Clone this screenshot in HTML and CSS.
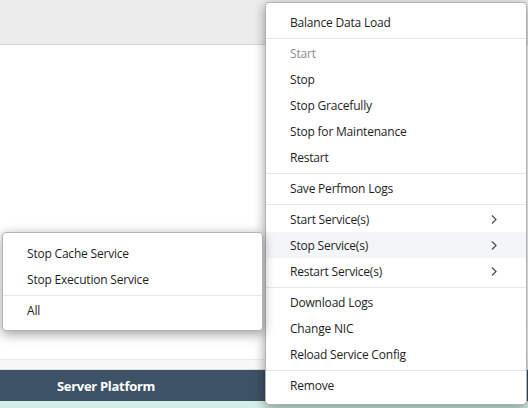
FILE: index.html
```html
<!DOCTYPE html>
<html lang="en">
<head>
    <meta charset="UTF-8">
    <meta name="viewport" content="width=device-width, initial-scale=1.0">
    <title>Server actions</title>
    <link rel="stylesheet" href="styles.css">
</head>
<body>
    <div class="page">
        <!-- Верхняя панель -->
        <div class="toolbar"></div>

        <div class="content">
            <div class="table">
                <div class="row"></div>
                <div class="row"></div>
                <div class="row row-last"></div>
                <div class="table-head">
                    <div class="head-cell">Server Platform</div>
                </div>
                <div class="table-row-selected"></div>
            </div>
        </div>

        <!-- Основное контекстное меню -->
        <div class="menu main-menu">
            <div class="menu-item">Balance Data Load</div>
            <div class="menu-sep"></div>
            <div class="menu-item disabled">Start</div>
            <div class="menu-item">Stop</div>
            <div class="menu-item">Stop Gracefully</div>
            <div class="menu-item">Stop for Maintenance</div>
            <div class="menu-item">Restart</div>
            <div class="menu-sep"></div>
            <div class="menu-item">Save Perfmon Logs</div>
            <div class="menu-sep"></div>
            <div class="menu-item has-sub">
                <span>Start Service(s)</span>
                <svg class="chevron" viewBox="0 0 6 10"><path d="M1 1 L5 5 L1 9"/></svg>
            </div>
            <div class="menu-item has-sub active">
                <span>Stop Service(s)</span>
                <svg class="chevron" viewBox="0 0 6 10"><path d="M1 1 L5 5 L1 9"/></svg>
            </div>
            <div class="menu-item has-sub">
                <span>Restart Service(s)</span>
                <svg class="chevron" viewBox="0 0 6 10"><path d="M1 1 L5 5 L1 9"/></svg>
            </div>
            <div class="menu-sep"></div>
            <div class="menu-item">Download Logs</div>
            <div class="menu-item">Change NIC</div>
            <div class="menu-item">Reload Service Config</div>
            <div class="menu-sep"></div>
            <div class="menu-item">Remove</div>
        </div>

        <!-- Подменю "Stop Service(s)" -->
        <div class="menu sub-menu">
            <div class="menu-item">Stop Cache Service</div>
            <div class="menu-item">Stop Execution Service</div>
            <div class="menu-sep"></div>
            <div class="menu-item">All</div>
        </div>
    </div>
</body>
</html>
```

FILE: styles.css
```css
/* Основные стили */
body {
    margin: 0;
    font-family: 'Open Sans', 'Liberation Sans', sans-serif;
    background: #ffffff;
    overflow: hidden;
}

.page {
    position: relative;
    width: 528px;
    height: 408px;
    display: flex;
    flex-direction: column;
    overflow: hidden;
}

.toolbar {
    height: 44px;
    background: #ececec;
    border-bottom: 1px solid #d2d2d2;
    flex-shrink: 0;
}

.content {
    flex: 1;
    display: flex;
    flex-direction: column;
    justify-content: flex-end;
}

.row {
    height: 32px;
    border-bottom: 1px solid #ebebeb;
}

.row-last {
    height: 9px;
    background: #f7f7f7;
    border-bottom: 1px solid #dcdcdc;
}

.table-head {
    height: 31px;
    background: #3e5266;
    display: flex;
}

.head-cell {
    width: 212px;
    color: #ffffff;
    font-weight: 700;
    font-size: 13px;
    letter-spacing: -0.3px;
    display: flex;
    align-items: center;
    justify-content: center;
}

.table-row-selected {
    height: 7px;
    background: #d4efe8;
}

/* Контекстные меню */
.menu {
    position: absolute;
    background: #ffffff;
    border: 1px solid #b3b3b3;
    border-radius: 4px;
    padding: 6px 0;
    box-shadow: 0 3px 12px rgba(0, 0, 0, 0.4);
    box-sizing: border-box;
}

.main-menu {
    left: 265px;
    top: 2px;
    width: 262px;
}

.sub-menu {
    left: 2px;
    top: 232px;
    width: 261px;
    padding: 7px 0;
}

.menu-item {
    height: 26px;
    padding: 0 24px;
    display: flex;
    align-items: center;
    justify-content: space-between;
    font-size: 12px;
    letter-spacing: -0.2px;
    color: #1e1e1e;
    white-space: nowrap;
}

.menu-item.disabled {
    color: #8a8a8a;
}

.menu-item.active {
    background: #f3f5f8;
}

.menu-sep {
    height: 1px;
    background: #e6e6e6;
    margin: 3px 0 1px;
}

.chevron {
    width: 6px;
    height: 11px;
    margin-right: 5px;
    fill: none;
    stroke: #4a4a4a;
    stroke-width: 1.2;
}
```
